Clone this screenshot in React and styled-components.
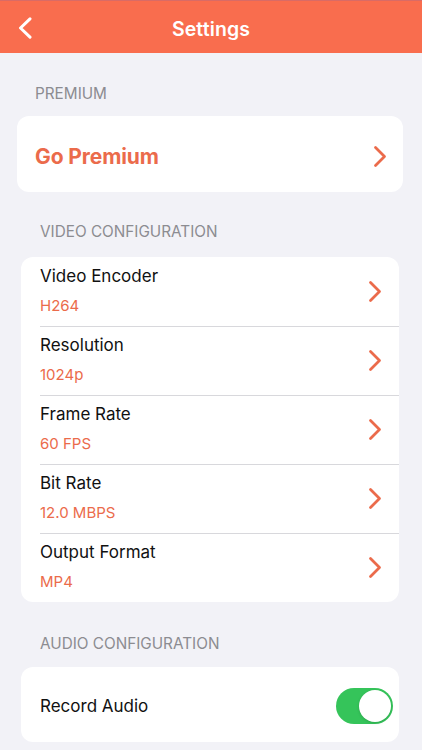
import React, { useState } from 'react';
import styled, { createGlobalStyle } from 'styled-components';

const GlobalStyle = createGlobalStyle`
  html, body {
    margin: 0;
    padding: 0;
    background: #f2f2f7;
  }
  body {
    font-family: Inter, "Noto Sans", "Liberation Sans", sans-serif;
    -webkit-font-smoothing: antialiased;
  }
`;

const Page = styled.div`
  min-height: 750px;
  background: #f2f2f7;
  padding-bottom: 20px;
`;

const Header = styled.header`
  height: 52px;
  border-top: 1px solid #d96b66;
  background: #f96d4e;
  display: flex;
  align-items: center;
  justify-content: center;
  position: relative;
`;

const BackButton = styled.button`
  position: absolute;
  left: 18px;
  top: 16px;
  width: 14px;
  height: 22px;
  padding: 0;
  border: 0;
  background: none;
  display: flex;
  cursor: pointer;
`;

const Title = styled.h1`
  margin: 4px 0 0;
  font-size: 19.5px;
  font-weight: 600;
  color: #fff;
  letter-spacing: 0.1px;
`;

const Section = styled.section`
  margin: 0 ${p => p.$right}px 0 ${p => p.$left}px;
`;

const Label = styled.div`
  padding: ${p => p.$top}px 0 ${p => p.$bottom}px ${p => p.$indent}px;
  font-size: 15.3px;
  line-height: 18px;
  color: #8c8c91;
  text-transform: uppercase;
`;

const Card = styled.div`
  background: #fff;
  border-radius: 12px;
  overflow: hidden;
`;

const PremiumRow = styled.div`
  height: 76px;
  display: flex;
  align-items: center;
  justify-content: space-between;
  padding: 4px 16px 0 18px;
  box-sizing: border-box;
  cursor: pointer;
`;

const PremiumText = styled.span`
  font-size: 21px;
  font-weight: 700;
  color: #eb6b4b;
  letter-spacing: -0.1px;
`;

const Row = styled.div`
  height: 69px;
  display: flex;
  align-items: center;
  justify-content: space-between;
  padding: 0 17px 0 19px;
  box-sizing: border-box;
  position: relative;
  cursor: pointer;

  & + &::before {
    content: '';
    position: absolute;
    top: 0;
    left: 19px;
    right: 0;
    height: 1px;
    background: #d8d8dc;
  }
`;

const RowText = styled.div`
  align-self: flex-start;
  padding-top: 9px;
  display: flex;
  flex-direction: column;
  gap: 11px;
`;

const RowTitle = styled.span`
  font-size: 17px;
  line-height: 20px;
  color: #111;
`;

const RowValue = styled.span`
  font-size: 15px;
  line-height: 18px;
  color: #eb6b4b;
`;

const ToggleRow = styled.div`
  height: 75px;
  display: flex;
  align-items: center;
  justify-content: space-between;
  padding: 3px 6px 0 19px;
  box-sizing: border-box;
`;

const Switch = styled.button`
  width: 57px;
  height: 36px;
  border: 0;
  border-radius: 18px;
  padding: 2px;
  background: ${p => (p.$on ? '#35c45a' : '#e5e5ea')};
  display: flex;
  justify-content: ${p => (p.$on ? 'flex-end' : 'flex-start')};
  cursor: pointer;
  transition: background 0.2s;
`;

const Knob = styled.span`
  width: 32px;
  height: 32px;
  border-radius: 50%;
  background: #fff;
  box-shadow: 0 1px 3px rgba(0, 0, 0, 0.15);
`;

const Chevron = ({ color = '#eb6b4b' }) => (
  <svg width="14" height="23" viewBox="0 0 14 23" fill="none">
    <path d="M2.5 2.5 L11.5 11.5 L2.5 20.5" stroke={color} strokeWidth="2.8" strokeLinecap="round" strokeLinejoin="round" />
  </svg>
);

const BackArrow = () => (
  <svg width="14" height="22" viewBox="0 0 14 22" fill="none">
    <path d="M12 1.8 L2.5 11 L12 20.2" stroke="#fff" strokeWidth="3" strokeLinecap="round" strokeLinejoin="round" />
  </svg>
);

const videoSettings = [
  { title: 'Video Encoder', value: 'H264' },
  { title: 'Resolution', value: '1024p' },
  { title: 'Frame Rate', value: '60 FPS' },
  { title: 'Bit Rate', value: '12.0 MBPS' },
  { title: 'Output Format', value: 'MP4' },
];

function App() {
  const [recordAudio, setRecordAudio] = useState(true);

  return (
    <Page>
      <GlobalStyle />
      <Header>
        <BackButton aria-label="Back">
          <BackArrow />
        </BackButton>
        <Title>Settings</Title>
      </Header>

      <Section $left={17} $right={19}>
        <Label $top={32} $bottom={13} $indent={18}>Premium</Label>
        <Card>
          <PremiumRow>
            <PremiumText>Go Premium</PremiumText>
            <Chevron />
          </PremiumRow>
        </Card>
      </Section>

      <Section $left={21} $right={23}>
        <Label $top={31} $bottom={16} $indent={19}>Video Configuration</Label>
        <Card>
          {videoSettings.map(item => (
            <Row key={item.title}>
              <RowText>
                <RowTitle>{item.title}</RowTitle>
                <RowValue>{item.value}</RowValue>
              </RowText>
              <Chevron />
            </Row>
          ))}
        </Card>
      </Section>

      <Section $left={21} $right={23}>
        <Label $top={33} $bottom={14} $indent={19}>Audio Configuration</Label>
        <Card>
          <ToggleRow>
            <RowTitle>Record Audio</RowTitle>
            <Switch $on={recordAudio} onClick={() => setRecordAudio(v => !v)} aria-label="Record Audio">
              <Knob />
            </Switch>
          </ToggleRow>
        </Card>
      </Section>
    </Page>
  );
}

export default App;
